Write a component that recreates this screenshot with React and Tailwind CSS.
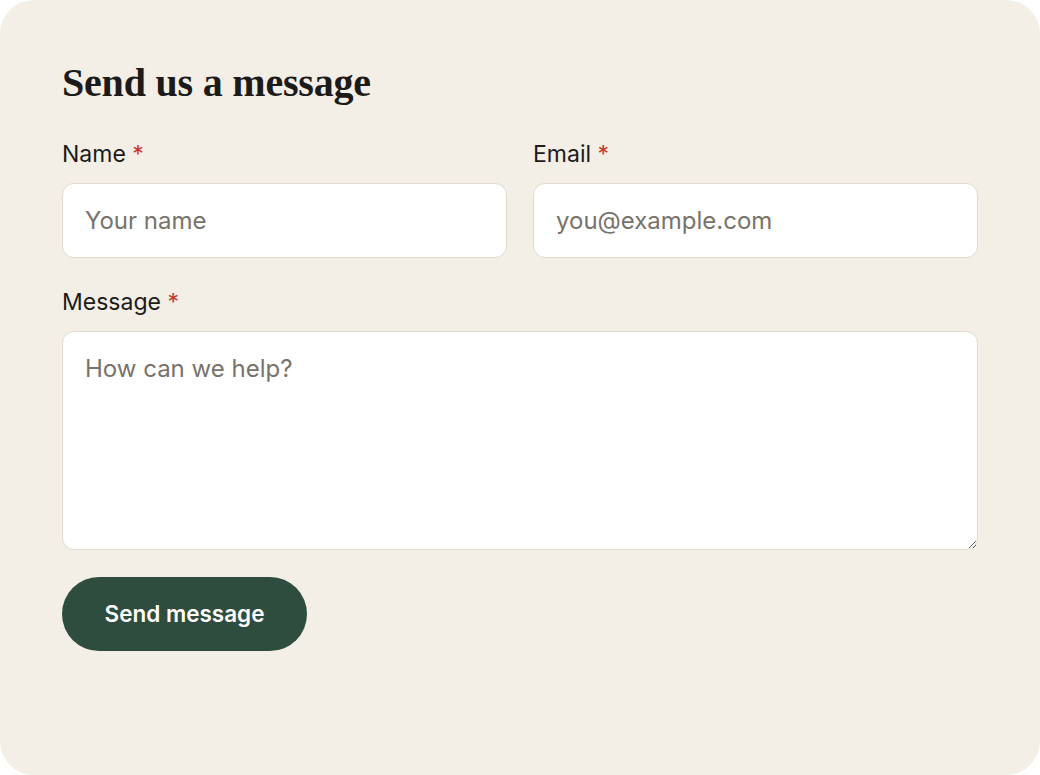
export default function App() {
  const sans = { fontFamily: 'Inter, "Noto Sans", sans-serif' };
  return (
    <div className="w-[1040px] h-[775px] bg-white">
      <div
        className="h-full rounded-[34px] bg-[#f3eee6] px-[62px] pt-[58px]"
        style={sans}
      >
        <h2 className="text-[40px] leading-[50px] font-bold text-[#1c1b19] tracking-[-0.2px] [font-family:'Liberation_Serif',serif]">
          Send us a message
        </h2>
        <div className="mt-[32px] grid grid-cols-2 gap-[26px]">
          <div>
            <label className="block text-[23px] leading-[28px] text-[#1c1b19] mb-[15px]">
              Name <span className="text-[#c8372d]">*</span>
            </label>
            <input
              className="w-full h-[75px] rounded-[12px] border border-[#e2dacd] bg-white px-[22px] text-[24px] text-[#1c1b19] placeholder:text-[#77736b] outline-none"
              placeholder="Your name"
            />
          </div>
          <div>
            <label className="block text-[23px] leading-[28px] text-[#1c1b19] mb-[15px]">
              Email <span className="text-[#c8372d]">*</span>
            </label>
            <input
              className="w-full h-[75px] rounded-[12px] border border-[#e2dacd] bg-white px-[22px] text-[24px] text-[#1c1b19] placeholder:text-[#77736b] outline-none"
              placeholder="you@example.com"
            />
          </div>
        </div>
        <div className="mt-[30px]">
          <label className="block text-[23px] leading-[28px] text-[#1c1b19] mb-[15px]">
            Message <span className="text-[#c8372d]">*</span>
          </label>
          <textarea
            className="block w-full h-[219px] rounded-[12px] border border-[#e2dacd] bg-white px-[22px] py-[20px] text-[24px] leading-[34px] text-[#1c1b19] placeholder:text-[#77736b] outline-none"
            placeholder="How can we help?"
          />
        </div>
        <button className="mt-[27px] h-[74px] w-[245px] rounded-full bg-[#2f4d3f] text-white text-[22.5px] font-semibold">
          Send message
        </button>
      </div>
    </div>
  );
}
